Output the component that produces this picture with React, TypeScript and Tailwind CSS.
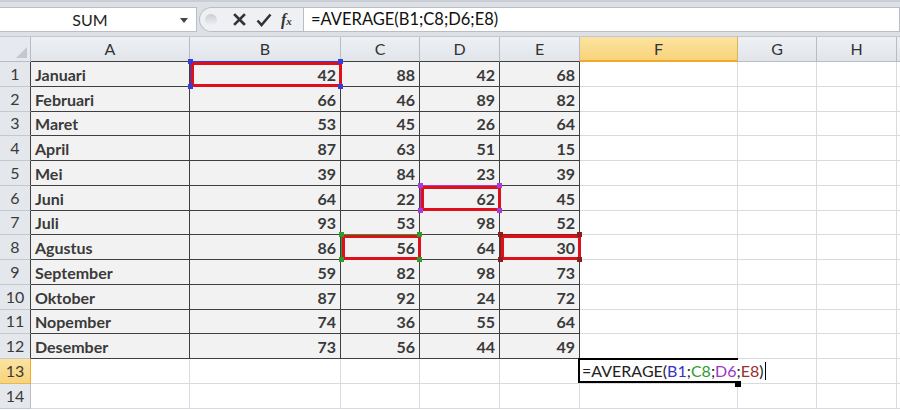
import React from "react";

const COLS = ["A", "B", "C", "D", "E", "F", "G", "H", ""];

const DATA: [string, number, number, number, number][] = [
  ["Januari", 42, 88, 42, 68],
  ["Februari", 66, 46, 89, 82],
  ["Maret", 53, 45, 26, 64],
  ["April", 87, 63, 51, 15],
  ["Mei", 39, 84, 23, 39],
  ["Juni", 64, 22, 62, 45],
  ["Juli", 93, 53, 98, 52],
  ["Agustus", 86, 56, 64, 30],
  ["September", 59, 82, 98, 73],
  ["Oktober", 87, 92, 24, 72],
  ["Nopember", 74, 36, 55, 64],
  ["Desember", 73, 56, 44, 49],
];

// red boxes drawn over the referenced cells: [row, col, corner colour]
const MARKS: Record<string, string> = {
  "1-1": "#3b3bd6",
  "8-2": "#2f9b2f",
  "6-3": "#a43fd6",
  "8-4": "#8a1f1f",
};

function Mark({ color }: { color: string }) {
  return (
    <div className="pointer-events-none absolute inset-0 z-10">
      <div className="absolute left-0 right-[-1px] top-[-1px] bottom-[-1px] border border-[currentColor]" style={{ color }} />
      <div className="absolute left-[1px] right-[-2px] top-[0px] bottom-[-1px] border-[3px] border-[#e0101a]" />
      <div className="absolute left-[-2px] top-[-3px] h-[5px] w-[5px]" style={{ background: color }} />
      <div className="absolute right-[-3px] top-[-3px] h-[5px] w-[5px]" style={{ background: color }} />
      <div className="absolute left-[-2px] bottom-[-3px] h-[5px] w-[5px]" style={{ background: color }} />
      <div className="absolute right-[-3px] bottom-[-3px] h-[5px] w-[5px]" style={{ background: color }} />
    </div>
  );
}

function FormulaBar() {
  return (
    <div className="flex h-[37px] flex-col bg-[#dde1e6]">
      <div className="h-[2px] bg-[#c9ced5]" />
      <div className="mt-[5px] flex h-[25px] items-stretch">
        <div className="relative flex w-[197px] items-center justify-center border border-l-0 border-[#b9bec6] bg-white text-[16px] text-[#222]">
          <span className="mr-[16px]">SUM</span>
          <svg className="absolute right-[8px] top-[10px]" width="8" height="5" viewBox="0 0 8 5">
            <path d="M0 0h8L4 5z" fill="#444" />
          </svg>
        </div>
        <div className="ml-[2px] flex w-[104px] items-center rounded-l-full border border-r-0 border-[#b9bec6] bg-[#eef0f3]">
          <div className="ml-[5px] h-[12px] w-[12px] rounded-full bg-linear-to-b from-[#c9ccd1] to-[#f1f2f4]" />
          <svg className="ml-[16px]" width="13" height="13" viewBox="0 0 13 13">
            <path d="M2 2l9 9M11 2l-9 9" stroke="#333" strokeWidth="2.6" strokeLinecap="square" />
          </svg>
          <svg className="ml-[10px]" width="16" height="14" viewBox="0 0 16 14">
            <path d="M1.5 7.5l4 4.5L14.5 1.5" stroke="#333" strokeWidth="2.6" fill="none" />
          </svg>
          <span className="ml-[9px] font-['Liberation_Serif',serif] text-[16px] font-bold italic text-[#333]">
            f<span className="text-[11px]">x</span>
          </span>
        </div>
        <div className="flex flex-1 items-center border border-[#b9bec6] bg-white pl-[7px] text-[16.5px] text-[#111]">
          =AVERAGE(B1;C8;D6;E8)
        </div>
      </div>
      <div className="mt-auto h-[1px] bg-[#c3c8cf]" />
    </div>
  );
}

function EditCell() {
  return (
    <>
      <div className="pointer-events-none absolute left-[-2px] top-[-1px] h-[calc(100%+1px)] w-[160px] border-2 border-r-0 border-black" />
      <div className="absolute bottom-[-4px] left-[155px] z-20 h-[6px] w-[6px] bg-black" />
      <div className="absolute left-[1px] top-[1px] z-10 flex h-[21px] items-center whitespace-nowrap bg-white pl-[1px] pr-[2px] text-[16px] text-[#222]">
        =AVERAGE(<span className="text-[#3434c8]">B1</span>;<span className="text-[#2f9b2f]">C8</span>;
        <span className="text-[#9b35c8]">D6</span>;<span className="text-[#953030]">E8</span>)
        <span className="ml-[1px] inline-block h-[18px] w-[1px] bg-black" />
      </div>
    </>
  );
}

export default function App() {
  const rows = Array.from({ length: 14 }, (_, i) => i + 1);

  return (
    <div className="h-[410px] w-[900px] overflow-hidden bg-white font-['Lato','Liberation_Sans',sans-serif]">
      <FormulaBar />
      <div className="grid grid-cols-[31px_159px_151px_79px_80px_80px_158px_79px_80px_1fr] grid-rows-[25px_repeat(14,24.75px)]">
        {/* corner */}
        <div className="relative border-r border-b border-[#b8bdc5] bg-[#e6e9ed]">
          <svg className="absolute bottom-[3px] right-[3px]" width="11" height="11" viewBox="0 0 11 11">
            <path d="M11 0v11H0z" fill="#c4c8ce" />
          </svg>
        </div>
        {COLS.map((c, ci) => {
          const active = c === "F";
          const inTable = ci <= 4;
          return (
            <div
              key={c + ci}
              className={
                "flex items-center justify-center border-r text-[16px] text-[#333] " +
                (active
                  ? "border-b-2 border-r-[#d9b45a] border-b-[#f0a830] bg-linear-to-b from-[#fbe3a0] to-[#f8d37a]"
                  : inTable
                    ? "border-b border-r-[#b8bdc5] border-b-[#3f3f3f] bg-linear-to-b from-[#eef0f3] to-[#e1e5ea]"
                    : "border-b border-r-[#b8bdc5] border-b-[#b8bdc5] bg-linear-to-b from-[#eef0f3] to-[#e1e5ea]")
              }
            >
              {c}
            </div>
          );
        })}

        {rows.map((r) => {
          const d = DATA[r - 1];
          const inRow = r <= 12;
          return (
            <React.Fragment key={r}>
              <div
                className={
                  "flex items-center justify-center border-b border-r text-[16px] text-[#3a3a3a] " +
                  (r === 13
                    ? "border-b-[#e0b860] border-r-[#f0a830] bg-linear-to-b from-[#fbe3a0] to-[#f8d37a]"
                    : inRow
                      ? "border-b-[#c4c9d0] border-r-[#3f3f3f] bg-[#e4e8ed]"
                      : "border-b-[#c4c9d0] border-r-[#b8bdc5] bg-[#e4e8ed]")
                }
              >
                {r}
              </div>
              {COLS.map((c, ci) => {
                const tableCell = inRow && ci <= 4;
                const mark = MARKS[`${r}-${ci}`];
                const edge = ci <= 4 && inRow ? "border-r-[#3f3f3f]" : "border-r-[#d9dbdf]";
                const bottom = tableCell ? "border-b-[#3f3f3f]" : "border-b-[#d9dbdf]";
                return (
                  <div
                    key={c + ci}
                    className={
                      "relative flex items-center border-b border-r pt-[2px] text-[16px] " +
                      (tableCell ? "bg-[#f2f2f2] font-bold text-[#3a3a3a] " : "bg-white ") +
                      edge +
                      " " +
                      bottom +
                      (ci === 0 ? " justify-start pl-[4px]" : " justify-end pr-[4px]")
                    }
                  >
                    {tableCell ? (ci === 0 ? d[0] : d[ci]) : null}
                    {mark && <Mark color={mark} />}
                    {r === 13 && c === "F" && <EditCell />}
                  </div>
                );
              })}
            </React.Fragment>
          );
        })}
      </div>
    </div>
  );
}
